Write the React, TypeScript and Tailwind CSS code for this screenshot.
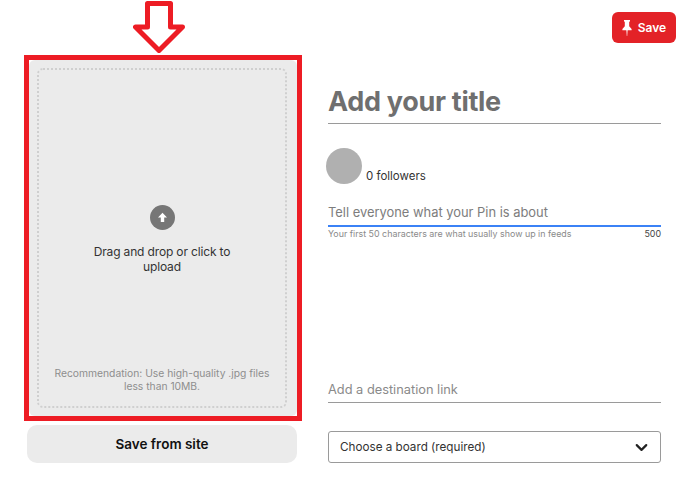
import { ChevronDown } from 'lucide-react'

const PinIcon = () => (
  <svg width="10" height="16" viewBox="0 0 10 16" fill="white">
    <path d="M2 0h6v1.200L7.200 2v4.200L9.600 9v1.200H5.600L5.200 16h-.4l-.4-5.800H.4V9l2.400-2.800V2L2 1.200z" />
  </svg>
)

const DownArrow = () => (
  <svg width="52" height="52" viewBox="0 0 52 52" fill="none">
    <path
      d="M14.500 2.500h23v23.500h12L26 49.500 2.500 26h12z"
      stroke="#ed1c24"
      strokeWidth="5"
      strokeLinejoin="round"
    />
  </svg>
)

const UploadIcon = () => (
  <div className="flex h-[25px] w-[25px] items-center justify-center rounded-full bg-[#767676]">
    <svg width="11" height="11" viewBox="0 0 11 11" fill="white">
      <path d="M5.500.8 10 5.500H7.200V10H3.800V5.500H1z" />
    </svg>
  </div>
)

export default function App() {
  return (
    <div className="relative flex h-[493px] w-[690px] overflow-hidden bg-white font-['Inter',sans-serif] text-[#222]">
      <div className="ml-6 flex w-[278px] flex-col">
        <div className="flex h-[55px] items-start pt-px pl-[109px]">
          <DownArrow />
        </div>
        <div className="h-[366px] border-[5px] border-[#ed1c24] bg-white">
          <div className="h-full rounded-[6px] bg-[#ebebeb] pt-2 pr-[10px] pb-2 pl-2">
            <div className="flex h-full flex-col items-center rounded-[6px] border-2 border-dotted border-[#cfcfcf] px-3">
              <div className="mt-[135px]">
                <UploadIcon />
              </div>
              <p className="mt-[14px] w-[150px] text-center text-[12px] leading-[15px] tracking-[-0.15px] text-[#333]">
                Drag and drop or click to upload
              </p>
              <p className="mt-auto mb-[13px] text-center text-[10.300px] leading-[13px] text-[#8e8e8e]">
                Recommendation: Use high-quality .jpg files less than 10MB.
              </p>
            </div>
          </div>
        </div>
        <button className="mt-1 ml-[3px] h-[38px] w-[270px] rounded-[10px] bg-[#ebebeb] text-[13.500px] font-semibold text-[#111]">
          Save from site
        </button>
      </div>

      <div className="ml-[26px] flex w-[333px] flex-col">
        <div className="mt-[82px] border-b border-[#9a9a9a] pb-px">
          <h1 className="text-[27px] leading-[40px] font-bold tracking-[-0.3px] text-[#6f6f6f]">Add your title</h1>
        </div>
        <div className="mt-[24px] -ml-0.5 flex items-end gap-1">
          <div className="h-9 w-9 rounded-full bg-[#b0b0b0]" />
          <span className="text-[11.500px] leading-[16px] text-[#333]">0 followers</span>
        </div>
        <div className="mt-[20px] border-b-2 border-[#3b82f6] pb-[4px] text-[12.900px] leading-[17px] text-[#7d7d7d]">
          Tell everyone what your Pin is about
        </div>
        <div className="mt-px flex justify-between text-[8.900px] leading-[12px] text-[#8a8a8a]">
          <span>Your first 50 characters are what usually show up in feeds</span>
          <span className="text-[#444]">500</span>
        </div>
        <div className="mt-[141px] border-b border-[#9a9a9a] pb-1 text-[12.800px] leading-[17px] text-[#8a8a8a]">
          Add a destination link
        </div>
        <div className="mt-7 flex h-8 items-center justify-between rounded-[3px] border border-[#9a9a9a] pr-[9px] pl-[11px] text-[11.700px] text-[#333]">
          <span className="pt-px">Choose a board (required)</span>
          <ChevronDown size={19} strokeWidth={2.75} className="text-[#222]" />
        </div>
      </div>

      <button className="absolute top-3 left-[612px] flex h-[31px] w-16 items-center justify-center gap-1.5 rounded-[6px] bg-[#e32227] text-[12px] font-semibold text-white">
        <PinIcon />
        Save
      </button>
    </div>
  )
}
